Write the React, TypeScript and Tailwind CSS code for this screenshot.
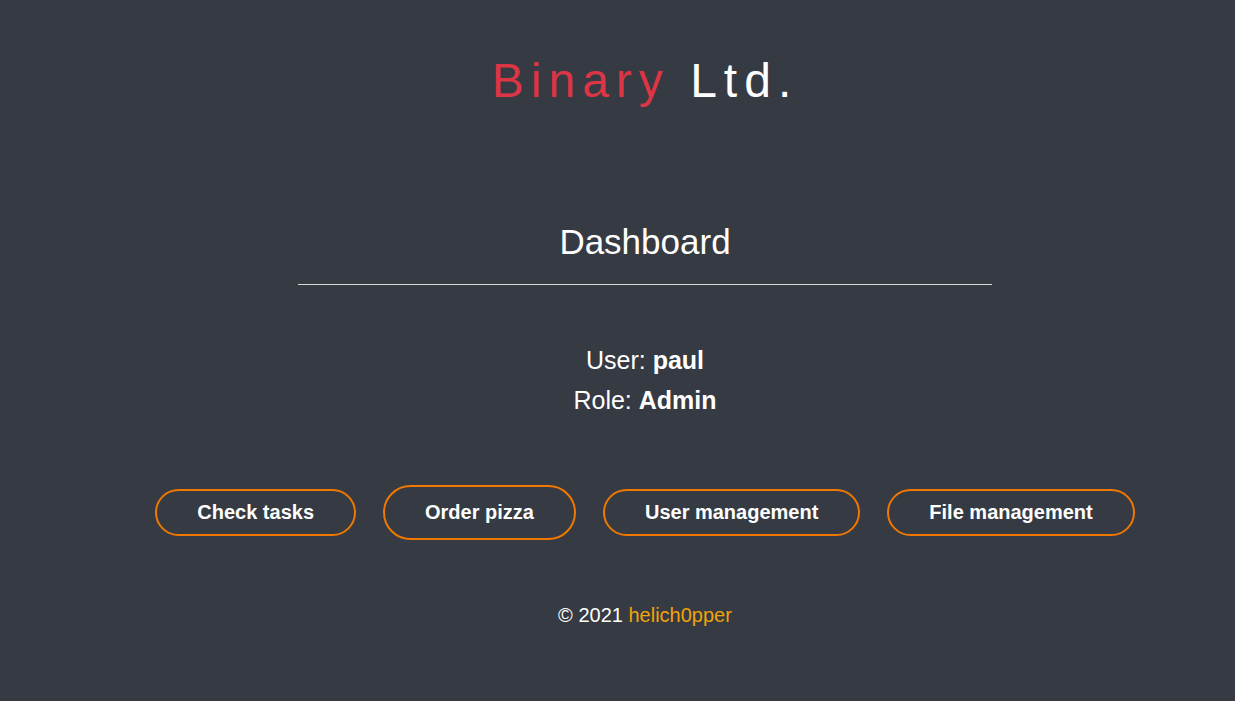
export default function App() {
  const buttons = [
    { label: "Check tasks", active: false },
    { label: "Order pizza", active: true },
    { label: "User management", active: false },
    { label: "File management", active: false },
  ];

  return (
    <div className="min-h-[701px] bg-[#363a42] text-white font-['Liberation_Sans',Arial,sans-serif]">
      <div className="flex flex-col items-center pl-[55px] pt-[52px] pb-10">
        {/* Brand */}
        <h1 className="text-[48px] leading-[58px] tracking-[7px] font-normal">
          <span className="text-[#dc3545]">Binary</span> <span>Ltd.</span>
        </h1>

        {/* Heading */}
        <h2 className="mt-[111px] text-[35px] leading-[42px] font-normal">Dashboard</h2>
        <div className="mt-[21px] w-[694px] border-t border-[#d6d6d6]" />

        {/* User info */}
        <div className="mt-[55px] flex flex-col items-center text-[25px] leading-[40px]">
          <p>
            User: <b className="font-bold">paul</b>
          </p>
          <p>
            Role: <b className="font-bold">Admin</b>
          </p>
        </div>

        {/* Actions */}
        <div className="mt-[65px] flex items-center gap-[27px]">
          {buttons.map((b) => (
            <button
              key={b.label}
              className={
                "rounded-full border-2 border-[#f07800] bg-transparent px-10 text-[20px] leading-[27px] font-bold text-white " +
                (b.active ? "py-3" : "py-2")
              }
            >
              {b.label}
            </button>
          ))}
        </div>

        {/* Footer */}
        <p className="mt-[61px] text-[20px] leading-[28px]">
          © 2021 <span className="text-[#f0a30a]">helich0pper</span>
        </p>
      </div>
    </div>
  );
}
